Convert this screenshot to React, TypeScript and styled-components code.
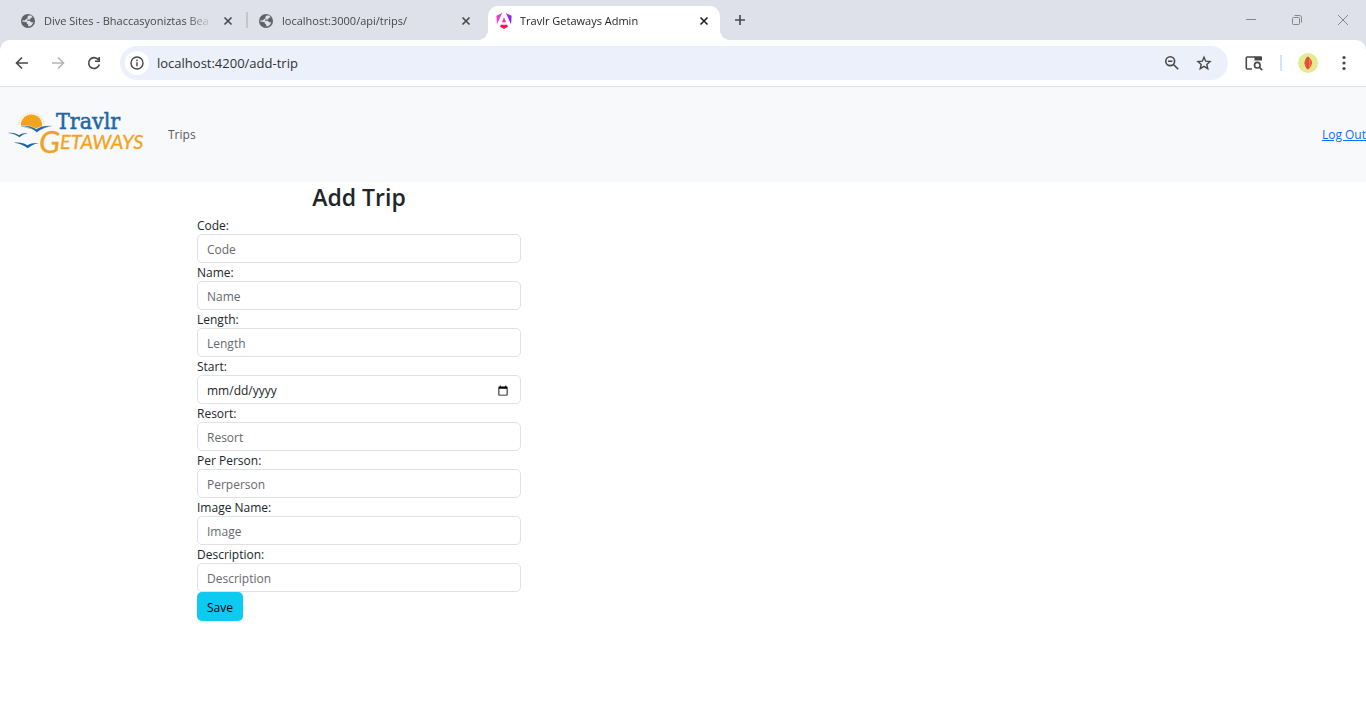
import React from "react";
import styled, { createGlobalStyle } from "styled-components";

const GlobalStyle = createGlobalStyle`
  *, *::before, *::after { box-sizing: border-box; }
  body {
    margin: 0;
    background: #fff;
    color: #212529;
    font: 12px/18px "Open Sans", "Noto Sans", sans-serif;
  }
  button, input { font: inherit; color: inherit; }
  svg { display: block; flex: none; }
`;

const IconButton = styled.button<{ $width?: number; $height?: number; $color?: string }>`
  display: flex;
  flex: none;
  align-items: center;
  justify-content: center;
  width: ${(p) => p.$width ?? 36}px;
  height: ${(p) => p.$height ?? 34}px;
  padding: 0;
  border: 0;
  background: none;
  color: ${(p) => p.$color ?? "#474747"};
`;

/* ---------- Browser window ---------- */

const Chrome = styled.header`
  background: #dee1e9;
`;

const TabStrip = styled.div`
  display: flex;
  align-items: flex-end;
  height: 40px;
  padding-left: 12px;
`;

const Tab = styled.div<{ $active?: boolean }>`
  position: relative;
  display: flex;
  flex: 0 1 232px;
  align-items: center;
  gap: 8px;
  min-width: 0;
  height: 34px;
  padding: 0 8px 4px;
  border-radius: 10px 10px 0 0;
  background: ${(p) => (p.$active ? "#fff" : "transparent")};
  color: ${(p) => (p.$active ? "#1f1f1f" : "#474747")};

  &::before,
  &::after {
    content: "";
    display: ${(p) => (p.$active ? "block" : "none")};
    position: absolute;
    bottom: 0;
    width: 10px;
    height: 10px;
  }
  &::before {
    right: 100%;
    background: radial-gradient(circle at 0 0, transparent 10px, #fff 10px);
  }
  &::after {
    left: 100%;
    background: radial-gradient(circle at 100% 0, transparent 10px, #fff 10px);
  }
`;

const TabTitle = styled.span`
  flex: 1;
  min-width: 0;
  overflow: hidden;
  font-size: 11px;
  white-space: nowrap;
  mask-image: linear-gradient(to left, transparent, #000 24px);
`;

const TabDivider = styled.span<{ $visible?: boolean }>`
  flex: none;
  width: 2px;
  height: 16px;
  margin: 0 2px 12px;
  background: ${(p) => (p.$visible ? "#c5c6ca" : "transparent")};
`;

const WindowButtons = styled.div`
  display: flex;
  align-self: flex-start;
  margin-left: auto;
`;

const Toolbar = styled.div`
  display: flex;
  align-items: center;
  height: 47px;
  padding: 0 4px;
  border-bottom: 1px solid #dfe1e2;
  border-radius: 10px 10px 0 0;
  background: #fff;
`;

const Omnibox = styled.form`
  display: flex;
  flex: 1;
  align-items: center;
  height: 34px;
  margin: 0 8px;
  padding: 0 8px 0 5px;
  border-radius: 17px;
  background: #ecf0fa;
`;

const SiteInfo = styled(IconButton)`
  border-radius: 50%;
  background: #fff;
`;

const Address = styled.input`
  flex: 1;
  min-width: 0;
  padding: 0 8px;
  border: 0;
  outline: 0;
  background: none;
  color: #303134;
  font-size: 13px;
  line-height: 20px;
`;

const ToolbarDivider = styled.span`
  width: 2px;
  height: 16px;
  margin: 0 8px;
  background: #d3e3fd;
`;

/* ---------- Page ---------- */

const Navbar = styled.nav`
  display: flex;
  align-items: center;
  gap: 24px;
  min-height: 95px;
  padding-left: 8px;
  background: #f8f9fb;
`;

const Brand = styled.a`
  padding-bottom: 4px;
`;

const NavLink = styled.a`
  color: #595a5c;
  text-decoration: none;
`;

const LogOut = styled.a`
  margin-left: auto;
  color: #0d6efd;
  text-decoration: underline;
`;

const Container = styled.main`
  max-width: 990px;
  margin: 0 auto;
  padding: 0 9px;
`;

const Column = styled.section`
  width: calc(100% / 3);
`;

const Title = styled.h1`
  margin: 0;
  padding: 2px 0 5px;
  font-size: 23px;
  font-weight: 600;
  line-height: 27px;
  text-align: center;
`;

const Label = styled.label`
  display: block;
  height: 18px;
  line-height: 20px;
`;

const Control = styled.input`
  display: block;
  width: 100%;
  height: 29px;
  padding: 2px 9px 0;
  border: 1px solid #dee2e6;
  border-radius: 5px;
  background: #fff;
  outline: 0;

  &::placeholder { color: #66696d; opacity: 1; }
  &::-webkit-datetime-edit-month-field,
  &::-webkit-datetime-edit-day-field,
  &::-webkit-datetime-edit-year-field { padding: 0; }
`;

const SaveButton = styled.button`
  display: block;
  height: 29px;
  padding: 2px 10px 0;
  border: 0;
  border-radius: 5px;
  background: #0dcaf0;
  color: #000;
`;

/* ---------- Icons ---------- */

const Globe = () => (
  <svg width="16" height="16" viewBox="0 0 16 16">
    <circle cx="8" cy="8" r="7" fill="#5f6368" />
    <path d="M8.600 2.600h2.600a5.600 5.600 0 0 1 1.400 1.800l-1.800.4-.6 1.600H7.400l-.6 1.400h3l1.300 1.500h2.200a5.600 5.600 0 0 1-3.500 3.900l-1.600.1v-1.800L6.800 10.600V9.300L2.400 8.600V7.300l2.400.3 1.200-1.500L7.700 5.400 7.300 4z" fill="#dee1e9" />
  </svg>
);

const Angular = () => (
  <svg width="16" height="16" viewBox="0 0 24 24">
    <defs>
      <linearGradient id="ng-left" x1="0" y1="1" x2="1" y2="0">
        <stop offset="0" stopColor="#f637b5" />
        <stop offset="1" stopColor="#e640e8" />
      </linearGradient>
      <linearGradient id="ng-right" x1="0" y1="0" x2="1" y2="1">
        <stop offset="0" stopColor="#c03af5" />
        <stop offset="1" stopColor="#6a12f5" />
      </linearGradient>
    </defs>
    <path d="M9.308 0 .662 3.999l.814 12.856L9.308 0Z" fill="url(#ng-left)" />
    <path d="m14.692 0 7.832 16.855.814-12.856L14.692 0Z" fill="url(#ng-right)" />
    <path d="M8.903 13.93h6.198L12 6.396 8.903 13.93Z" fill="#f030b0" />
    <path d="M16.712 17.711H7.288l-1.204 2.916L12 24l5.916-3.373-1.204-2.916Z" fill="#f5115c" />
  </svg>
);

const Cross = () => (
  <svg width="16" height="16" viewBox="0 0 16 16" fill="none" stroke="currentColor" strokeWidth="1.6">
    <path d="M4.5 4.5l7 7M11.5 4.5l-7 7" />
  </svg>
);

const Stroke = ({ d, size = 16, width = 1.6 }: { d: string; size?: number; width?: number }) => (
  <svg width={size} height={size} viewBox={`0 0 ${size} ${size}`} fill="none" stroke="currentColor" strokeWidth={width}>
    <path d={d} />
  </svg>
);

const Logo = () => (
  <svg width="136" height="48" viewBox="0 0 136 48" overflow="visible" role="img" aria-label="Travlr Getaways">
    <circle cx="23.500" cy="17" r="13" fill="none" stroke="#f6d79a" strokeWidth="1.6" strokeDasharray="0.8 1.4" pathLength="82" clipPath="url(#sky)" />
    <clipPath id="sky"><path d="M0 0h60v16.500H0z" /></clipPath>
    <path d="M13 17.500a10.600 10.600 0 1 1 21 0l-9 3z" fill="#f2a31b" />
    <path d="M12 16.700c7-.9 12 .6 16.200 3.300 4.500-3 9.500-4 16.800-3-6.500 1-11 2.700-16.200 6.500-4.300-3.600-9-5.900-16.800-6.800z" fill="#1f66a6" stroke="#f8f9fa" strokeWidth="0.5" />
    <path d="M0 24c5-.6 8 .3 11 2.200 2.600-1.700 5-2.400 9-2.200-3.500.8-6 2-8.500 4.200C8.500 25.900 5 24.500 0 24zM6 33.700c6-.6 10 .4 13.300 2.600 3.500-2 6.500-2.700 11.700-2.300-4.700 1-8 2.500-11.200 5.200C15.500 36.300 12 34.500 6 33.700z" fill="#1f66a6" />
    <text x="48" y="20" fill="#1f66a6" stroke="#1f66a6" strokeWidth="0.5" fontFamily="'DejaVu Serif Condensed', 'DejaVu Serif', serif" fontSize="23">Travlr</text>
    <text x="31" y="44" fill="#f2a31b" stroke="#f2a31b" strokeWidth="0.3" fontFamily="Lato, sans-serif" fontStyle="italic" fontSize="31">
      G<tspan fontSize="20" dy="-4">ETAWAYS</tspan>
    </text>
  </svg>
);

const fields = [
  { id: "code", label: "Code:", placeholder: "Code" },
  { id: "name", label: "Name:", placeholder: "Name" },
  { id: "length", label: "Length:", placeholder: "Length" },
  { id: "start", label: "Start:", type: "date" },
  { id: "resort", label: "Resort:", placeholder: "Resort" },
  { id: "perPerson", label: "Per Person:", placeholder: "Perperson" },
  { id: "image", label: "Image Name:", placeholder: "Image" },
  { id: "description", label: "Description:", placeholder: "Description" },
];

const tabs = [
  { title: "Dive Sites - Bhaccasyoniztas Bea", icon: <Globe />, divider: true },
  { title: "localhost:3000/api/trips/", icon: <Globe /> },
  { title: "Travlr Getaways Admin", icon: <Angular />, active: true },
];

export default function App() {
  return (
    <>
      <GlobalStyle />
      <Chrome>
        <TabStrip>
          {tabs.map((tab) => (
            <React.Fragment key={tab.title}>
              <Tab $active={tab.active}>
                {tab.icon}
                <TabTitle>{tab.title}</TabTitle>
                <IconButton $width={16} $height={16} $color={tab.active ? "#1f1f1f" : "#474747"} aria-label="Close tab">
                  <Cross />
                </IconButton>
              </Tab>
              <TabDivider $visible={tab.divider} />
            </React.Fragment>
          ))}
          <IconButton $width={28} $height={40} aria-label="New tab">
            <Stroke d="M8 3v10M3 8h10" />
          </IconButton>
          <WindowButtons>
            <IconButton $width={46} $height={40} $color="#84868b" aria-label="Minimize">
              <Stroke d="M3 7.500h10" width={1} />
            </IconButton>
            <IconButton $width={46} $height={40} $color="#84868b" aria-label="Restore">
              <Stroke d="M4.500 5.500h5a1 1 0 0 1 1 1v5a1 1 0 0 1-1 1h-5a1 1 0 0 1-1-1v-5a1 1 0 0 1 1-1zM5.500 3.500h5a2 2 0 0 1 2 2v5" width={1} />
            </IconButton>
            <IconButton $width={46} $height={40} $color="#84868b" aria-label="Close">
              <Stroke d="M3 3l10 10M13 3L3 13" width={1} />
            </IconButton>
          </WindowButtons>
        </TabStrip>
        <Toolbar>
          <IconButton aria-label="Back">
            <Stroke d="M14 8H3M8 2.500L2.500 8 8 13.500" />
          </IconButton>
          <IconButton $color="#b5b5b5" aria-label="Forward">
            <Stroke d="M2 8h11M8 2.500L13.500 8 8 13.500" />
          </IconButton>
          <IconButton aria-label="Reload">
            <Stroke d="M12.400 4.800A5.400 5.400 0 1 0 13.300 9.500M13.200 2v4.200H9" />
          </IconButton>
          <Omnibox onSubmit={(e) => e.preventDefault()}>
            <SiteInfo type="button" $width={24} $height={24} aria-label="Site information">
              <Stroke d="M8 2a6 6 0 1 1 0 12A6 6 0 1 1 8 2zM8 7.200v4M8 4.600v1.600" width={1.4} />
            </SiteInfo>
            <Address aria-label="Address" defaultValue="localhost:4200/add-trip" />
            <IconButton type="button" $width={32} aria-label="Zoom">
              <Stroke d="M6.200 1.800a4.400 4.400 0 1 1 0 8.800 4.400 4.400 0 1 1 0-8.800zM9.500 9.500l4.700 4.700M4 6.200h4.400" />
            </IconButton>
            <IconButton type="button" $width={32} aria-label="Bookmark">
              <Stroke d="M8 2.200l1.700 4 4.300.4-3.200 2.800 1 4.300L8 11.400l-3.800 2.300 1-4.300L2 6.600l4.300-.4z" width={1.4} />
            </IconButton>
          </Omnibox>
          <IconButton aria-label="Search tabs">
            <svg width="18" height="16" viewBox="0 0 18 16" fill="none" stroke="currentColor" strokeWidth="1.600">
              <path d="M7 14H2.300a1 1 0 0 1-1-1V3a1 1 0 0 1 1-1H10" />
              <path d="M9.500 1.200h6.500a1 1 0 0 1 1 1V5.500H9.500z" fill="currentColor" stroke="none" />
              <circle cx="12.300" cy="10.200" r="2.800" />
              <path d="M14.300 12.200l2.900 2.900" />
            </svg>
          </IconButton>
          <ToolbarDivider />
          <IconButton aria-label="Profile">
            <svg width="20" height="20" viewBox="0 0 20 20">
              <circle cx="10" cy="10" r="10" fill="#e4ea8f" />
              <path d="M9 4q-5 6 0 12z" fill="#c22f22" />
              <path d="M9 3.800h1.500q7 6 0 12.400H9z" fill="#ee4a2c" />
              <path d="M8 5.500v9M11.800 6v8" stroke="#f79a78" strokeWidth="0.8" />
            </svg>
          </IconButton>
          <IconButton aria-label="Menu">
            <svg width="16" height="16" viewBox="0 0 16 16" fill="currentColor">
              <circle cx="8" cy="2.500" r="1.600" />
              <circle cx="8" cy="8" r="1.600" />
              <circle cx="8" cy="13.500" r="1.600" />
            </svg>
          </IconButton>
        </Toolbar>
      </Chrome>

      <Navbar>
        <Brand href="#"><Logo /></Brand>
        <NavLink href="#">Trips</NavLink>
        <LogOut href="#">Log Out</LogOut>
      </Navbar>

      <Container>
        <Column>
          <Title>Add Trip</Title>
          <form onSubmit={(e) => e.preventDefault()}>
            {fields.map((f) => (
              <React.Fragment key={f.id}>
                <Label htmlFor={f.id}>{f.label}</Label>
                <Control id={f.id} type={f.type ?? "text"} placeholder={f.placeholder} />
              </React.Fragment>
            ))}
            <SaveButton type="submit">Save</SaveButton>
          </form>
        </Column>
      </Container>
    </>
  );
}
